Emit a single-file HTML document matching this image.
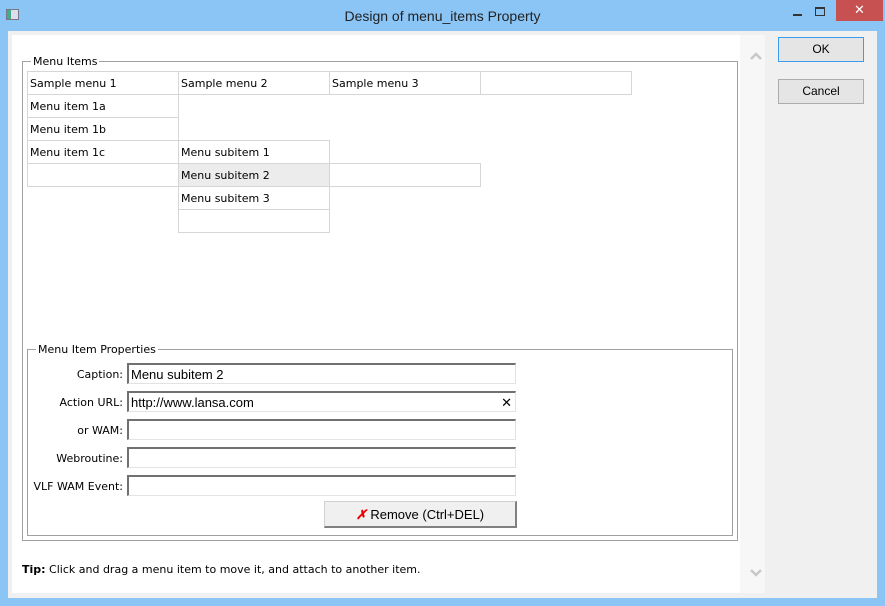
<!DOCTYPE html>
<html><head><style>
*{margin:0;padding:0;box-sizing:border-box}
body{width:885px;height:606px;background:#8bc5f6;position:relative;overflow:hidden;font-family:"DejaVu Sans","Liberation Sans",sans-serif;font-size:11px;color:#000}
.a{position:absolute}
.title{left:0;top:0;width:885px;height:31px;text-align:center;line-height:33px;font-family:"Liberation Sans",sans-serif;font-size:14px;color:#222}
.client{left:8px;top:31px;width:869px;height:567px;background:#f0f0f0}
.white{left:12px;top:35px;width:728px;height:558px;background:#fff}
.sb{left:740px;top:35px;width:25px;height:558px;background:#f7f7f7}
.btn{background:#e5e5e5;border:1px solid #adadad;text-align:center;font-family:"Liberation Sans",sans-serif;font-size:12px;line-height:23px}
.gb{border:1px solid #a0a0a0}
.leg{background:#fff;padding:0 2px;font-size:11px}
.c{position:absolute;border:1px solid #d6d6d6;height:24px;width:152px;padding-left:2px;line-height:24px;font-size:11px}
.lab{position:absolute;width:100px;text-align:right;font-size:11px}
.in{position:absolute;left:127px;width:389px;height:21px;border-top:2px solid #707070;border-left:2px solid #707070;border-right:1px solid #e3e3e3;border-bottom:1px solid #e3e3e3;font-family:"Liberation Sans",sans-serif;font-size:13px;padding-left:2px;line-height:19px}
</style></head><body>
<div class="a title">Design of menu_items Property</div>
<div class="a" style="left:6px;top:9px;width:13px;height:11px;border:1px solid #778;background:#dde"><div style="width:4px;height:9px;background:#4a8"></div></div>
<div class="a" style="left:793px;top:14px;width:9px;height:2px;background:#333"></div>
<div class="a" style="left:815px;top:7px;width:10px;height:9px;border:1px solid #333;border-top-width:2px"></div>
<div class="a" style="left:836px;top:0;width:47px;height:21px;background:#c75050;color:#fff;text-align:center;font-size:13px;line-height:21px">✕</div>
<div class="a client"></div>
<div class="a white"></div>
<div class="a sb"></div>
<div class="a" style="left:750px;top:50px;width:12px;height:12px"><svg width="12" height="8"><path d="M1 7L6 2L11 7" stroke="#c8c8c8" stroke-width="2.5" fill="none"/></svg></div>
<div class="a" style="left:750px;top:567px"><svg width="12" height="8"><path d="M1 1L6 6L11 1" stroke="#c8c8c8" stroke-width="2.5" fill="none"/></svg></div>
<div class="a btn" style="left:778px;top:37px;width:86px;height:25px;border-color:#3c9bef">OK</div>
<div class="a btn" style="left:778px;top:79px;width:86px;height:25px">Cancel</div>

<div class="a gb" style="left:22px;top:61px;width:716px;height:480px"></div>
<div class="a leg" style="left:31px;top:55px">Menu Items</div>
<div class="c" style="left:27px;top:71px">Sample menu 1</div>
<div class="c" style="left:178px;top:71px">Sample menu 2</div>
<div class="c" style="left:329px;top:71px">Sample menu 3</div>
<div class="c" style="left:480px;top:71px"></div>
<div class="c" style="left:27px;top:94px">Menu item 1a</div>
<div class="c" style="left:27px;top:117px">Menu item 1b</div>
<div class="c" style="left:27px;top:140px">Menu item 1c</div>
<div class="c" style="left:27px;top:163px"></div>
<div class="c" style="left:178px;top:140px">Menu subitem 1</div>
<div class="c" style="left:178px;top:163px;background:#ececec">Menu subitem 2</div>
<div class="c" style="left:329px;top:163px"></div>
<div class="c" style="left:178px;top:186px">Menu subitem 3</div>
<div class="c" style="left:178px;top:209px"></div>

<div class="a gb" style="left:27px;top:349px;width:706px;height:187px"></div>
<div class="a leg" style="left:36px;top:343px">Menu Item Properties</div>
<div class="lab" style="left:23px;top:368px">Caption:</div>
<div class="lab" style="left:23px;top:396px">Action URL:</div>
<div class="lab" style="left:23px;top:424px">or WAM:</div>
<div class="lab" style="left:23px;top:452px">Webroutine:</div>
<div class="lab" style="left:10px;width:113px;top:480px">VLF WAM Event:</div>
<div class="in" style="top:363px">Menu subitem 2</div>
<div class="in" style="top:391px">http://www.lansa.com<span style="position:absolute;right:3px;font-size:13px">✕</span></div>
<div class="in" style="top:419px"></div>
<div class="in" style="top:447px"></div>
<div class="in" style="top:475px"></div>
<div class="a" style="left:324px;top:501px;width:193px;height:27px;background:#f0f0f0;border:1px solid #d0d0d0;border-right:2px solid #808080;border-bottom:2px solid #808080;text-align:center;line-height:25px;font-family:'Liberation Sans',sans-serif;font-size:13px"><span style="color:#e00;font-weight:bold;font-style:italic">✗</span> Remove (Ctrl+DEL)</div>
<div class="a" style="left:22px;top:563px"><b>Tip:</b> Click and drag a menu item to move it, and attach to another item.</div>
</body></html>
